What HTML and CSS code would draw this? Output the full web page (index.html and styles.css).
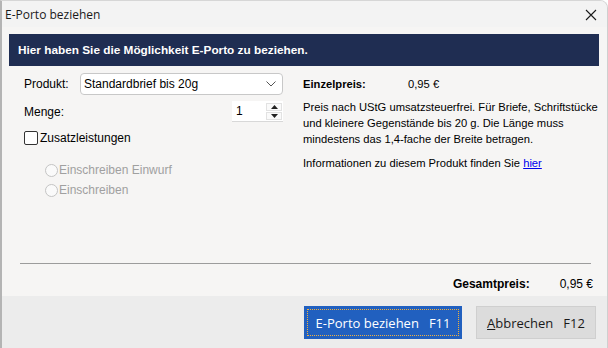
FILE: index.html
```html
<!DOCTYPE html>
<html>

<head>
  <meta charset="UTF-8" />
  <title>E-Porto beziehen</title>
  <link rel="stylesheet" href="styles.css">
</head>

<body>
  <div class="window">
    <div class="titlebar">
      <span class="title">E-Porto beziehen</span>
      <svg class="close" width="12" height="12" viewBox="0 0 12 12">
        <path d="M1 1 L11 11 M11 1 L1 11" stroke="#1a1a1a" stroke-width="1.1" fill="none" />
      </svg>
    </div>

    <div class="content">
      <div class="banner">Hier haben Sie die Möglichkeit E-Porto zu beziehen.</div>

      <div class="columns">
        <div class="left">
          <div class="row">
            <label class="label">Produkt:</label>
            <div class="select">
              <span>Standardbrief bis 20g</span>
              <svg width="10" height="6" viewBox="0 0 10 6">
                <path d="M0.5 0.5 L5 5 L9.5 0.5" stroke="#555" stroke-width="1" fill="none" />
              </svg>
            </div>
          </div>
          <div class="row menge">
            <label class="label">Menge:</label>
            <div class="spin">
              <span class="spin-value">1</span>
              <div class="spin-buttons">
                <div class="spin-btn">
                  <svg width="7" height="4" viewBox="0 0 7 4"><path d="M0 4 L3.5 0 L7 4 Z" fill="#222" /></svg>
                </div>
                <div class="spin-btn">
                  <svg width="7" height="4" viewBox="0 0 7 4"><path d="M0 0 L3.5 4 L7 0 Z" fill="#222" /></svg>
                </div>
              </div>
            </div>
          </div>
          <div class="check">
            <span class="box"></span>
            <span>Zusatzleistungen</span>
          </div>
          <div class="radios">
            <div class="radio"><span class="circle"></span><span>Einschreiben Einwurf</span></div>
            <div class="radio"><span class="circle"></span><span>Einschreiben</span></div>
          </div>
        </div>

        <div class="right">
          <div class="price">
            <span class="price-label">Einzelpreis:</span>
            <span>0,95 €</span>
          </div>
          <p class="info">Preis nach UStG umsatzsteuerfrei. Für Briefe, Schriftstücke<br>und kleinere Gegenstände bis 20 g. Die Länge muss<br>mindestens das 1,4-fache der Breite betragen.</p>
          <p class="info">Informationen zu diesem Produkt finden Sie <a href="#">hier</a></p>
        </div>
      </div>

      <hr class="separator">

      <div class="total">
        <span class="total-label">Gesamtpreis:</span>
        <span>0,95 €</span>
      </div>
    </div>

    <div class="footer">
      <button class="btn primary"><span class="focus">E-Porto beziehen<span class="key">F11</span></span></button>
      <button class="btn"><span><u>A</u>bbrechen<span class="key">F12</span></span></button>
    </div>
  </div>
</body>

</html>
```

FILE: styles.css
```css
html,
body {
  margin: 0;
  background: #ffffff;
}

.window {
  width: 608px;
  height: 348px;
  box-sizing: border-box;
  border-left: 2px solid #b4b4b4;
  border-right: 1px solid #cfcfcf;
  border-top: 1px solid #d6d6d6;
  border-top-right-radius: 8px;
  overflow: hidden;
  display: flex;
  flex-direction: column;
  background: #f6f5f4;
  font-family: "Liberation Sans", Arial, sans-serif;
  font-size: 12px;
  color: #000;
}

/* Title bar */
.titlebar {
  height: 26px;
  background: #f3f3f3;
  display: flex;
  align-items: center;
  justify-content: space-between;
  padding: 0 10px 0 3px;
  flex-shrink: 0;
}

.title {
  font-family: "Open Sans", sans-serif;
  font-size: 12px;
  color: #1a1a1a;
}

.close {
  margin-top: 1px;
}

.content {
  flex: 1;
  min-height: 0;
  overflow: hidden;
  padding: 7px 8px 0 7px;
}

.banner {
  background: #1f2d52;
  color: #fff;
  font-weight: bold;
  font-size: 11.8px;
  height: 32px;
  line-height: 32px;
  padding-left: 9px;
}

.columns {
  display: flex;
  height: 197px;
  padding-top: 7px;
  box-sizing: border-box;
}

.left {
  width: 274px;
  padding-left: 15px;
  box-sizing: border-box;
}

.right {
  padding-left: 20px;
  flex: 1;
  font-size: 11.2px;
}

.row {
  display: flex;
  align-items: center;
  justify-content: space-between;
}

.label {
  color: #000;
}

.select {
  width: 203px;
  height: 22px;
  box-sizing: border-box;
  border: 1px solid #c8c8c8;
  border-radius: 4px;
  background: #fff;
  display: flex;
  align-items: center;
  justify-content: space-between;
  padding: 0 6px 0 3px;
}

.menge {
  margin-top: 6px;
}

.spin {
  width: 51px;
  height: 21px;
  box-sizing: border-box;
  background: #fff;
  border-bottom: 1px solid #d8d8d8;
  display: flex;
  align-items: center;
  justify-content: space-between;
  padding: 0 1px 0 4px;
}

.spin-buttons {
  display: flex;
  flex-direction: column;
  gap: 1px;
}

.spin-btn {
  width: 16px;
  height: 8px;
  border: 1px solid #e2e2e2;
  box-sizing: border-box;
  background: #fafafa;
  display: flex;
  align-items: center;
  justify-content: center;
}

.check {
  display: flex;
  align-items: center;
  gap: 2px;
  margin-top: 9px;
}

.box {
  width: 12px;
  height: 12px;
  border: 1px solid #333;
  border-radius: 2px;
  background: #fff;
}

.radios {
  margin-top: 15px;
  padding-left: 21px;
  color: #a0a0a0;
}

.radio {
  display: flex;
  align-items: center;
  gap: 1px;
  height: 20px;
}

.circle {
  width: 11px;
  height: 11px;
  border: 1px solid #c4c4c4;
  border-radius: 50%;
  background: #fafafa;
}

.price {
  display: flex;
  margin-top: 5px;
}

.price-label {
  font-weight: bold;
  width: 105px;
}

.info {
  margin: 9px 0 0;
  line-height: 16px;
  white-space: nowrap;
}

.info + .info {
  margin-top: 8px;
}

.info a {
  color: #0000ee;
}

.separator {
  border: none;
  border-top: 1px solid #9c9c9c;
  margin: 0 8px 0 11px;
}

.total {
  display: flex;
  justify-content: flex-end;
  gap: 30px;
  margin-top: 13px;
  padding-right: 6px;
}

.total-label {
  font-weight: bold;
}

/* Footer */
.footer {
  height: 52px;
  background: #ececec;
  display: flex;
  justify-content: flex-end;
  align-items: flex-start;
  gap: 14px;
  padding: 10px 11px 0 0;
  box-sizing: border-box;
  flex-shrink: 0;
}

.btn {
  height: 33px;
  font-family: "Open Sans", sans-serif;
  font-size: 13px;
  border: 1px solid #cfcfcf;
  background: #dcdcdc;
  color: #1a1a1a;
  padding: 2px;
  width: 120px;
}

.btn.primary {
  width: 158px;
  background: #2160bf;
  border-color: #2160bf;
  color: #fff;
}

.btn .focus {
  display: flex;
  align-items: center;
  justify-content: center;
  height: 100%;
  border: 1px dotted #f0b040;
  box-sizing: border-box;
}

.key {
  margin-left: 10px;
}
```
